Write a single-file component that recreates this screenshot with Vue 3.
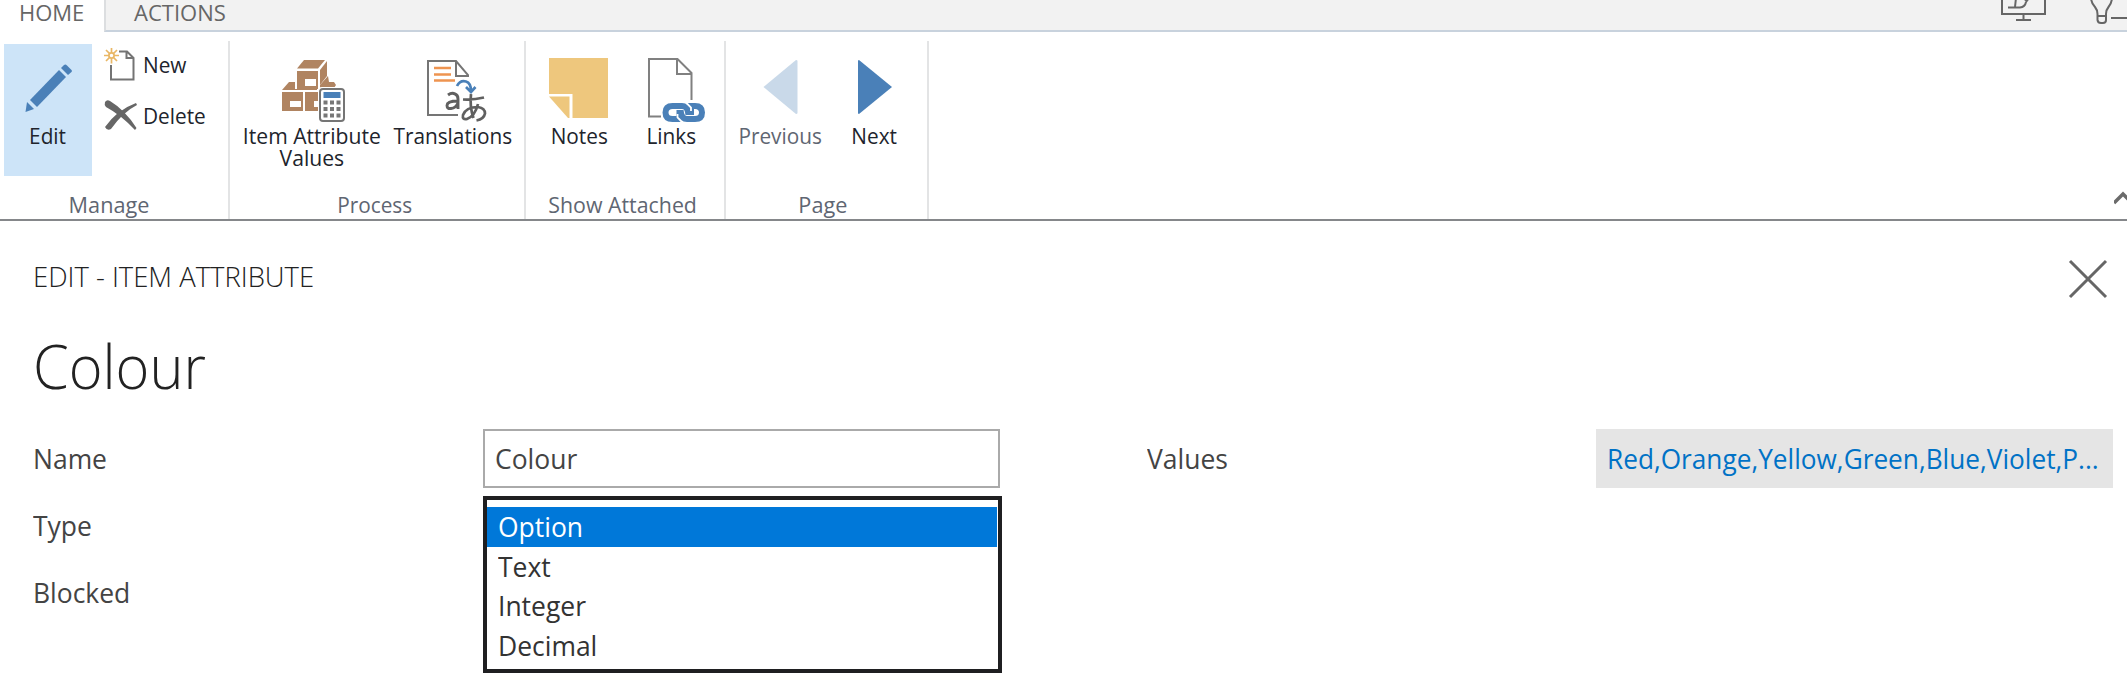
<script setup>
const options = ['Option', 'Text', 'Integer', 'Decimal']
const selected = 'Option'
</script>

<template>
  <div class="page">
    <nav class="tabs">
      <div class="tab active"><span class="t home">HOME</span></div>
      <div class="tab rest"><span class="t actions">ACTIONS</span></div>
      <svg class="tools" viewBox="0 0 127 30" width="127" height="30" fill="none" stroke="#666" stroke-width="2">
        <path d="M2 -4V14H45V-4M23.500 14V20M16 20H31" />
        <path d="M8 7.500H20Q25 7 26 2L29 -2M16 -2L15 7M23 -2L27 1" />
        <path d="M91 -3Q91 3 95 7Q97.500 10 97.500 14V20Q98 23 101 23H103Q106 23 106 20V14Q106 10 108.500 7Q112 3 112 -3M98 16H106" />
        <path d="M111 18H127" />
      </svg>
    </nav>

    <section class="ribbon">
      <div class="group g-manage">
        <div class="items">
          <button class="big edit">
            <svg class="icon" viewBox="0 0 64 64">
              <g fill="#4a80b8">
                <path d="M9.500 54L11 44L18 51Z" />
                <path d="M14 42L43 12L50 19L21 49Z" />
                <path d="M45 10L48 7Q49.500 6 51 7.500L55.500 12Q56.500 13 55.500 14L52 17Z" />
              </g>
            </svg>
            <span class="t">Edit</span>
          </button>
          <div class="stack">
            <button class="small">
              <svg class="sicon" viewBox="0 0 34 34" fill="none">
                <path d="M16 3.500H24L30.500 10V31.500H8V17M23.500 4V10H30" stroke="#747474" stroke-width="2" />
                <path d="M8.500 0V5M8.500 10V15.500M1 7.500H6M11 7.500H16M3 2L6.500 5.500M10.500 9.500L14 13M14 2L10.500 5.500M6.500 9.500L3 13" stroke="#e9b765" stroke-width="1.700" />
                <circle cx="8.500" cy="7.500" r="2.600" stroke="#e9b765" stroke-width="1.700" />
              </svg>
              <span class="t">New</span>
            </button>
            <button class="small">
              <svg class="sicon" viewBox="0 0 34 34" fill="#666">
                <path d="M2 3Q4 0 7 2Q22 11 33.500 29L32 31Q18 16 3 8Q1 6 2 3Z" />
                <path d="M33 4L34 6Q20 13 8 30Q4 32 2 28Q14 11 33 4Z" />
              </svg>
              <span class="t">Delete</span>
            </button>
          </div>
        </div>
        <div class="caption"><span class="t">Manage</span></div>
      </div>

      <div class="group g-process">
        <div class="items">
          <button class="big w-item">
            <svg class="icon" viewBox="0 0 64 64">
              <g fill="#b08461">
                <path d="M24 2H45L38 10.500H17Z" />
                <path d="M47 3V18L40 27V12Z" />
                <path d="M17 13H38V31H17Z" />
                <path d="M9 24H15V31H37V32H2Z" />
                <path d="M2 34H23V53H2ZM25 34H44V53H25Z" />
                <path d="M48 18L49 24H54L56 27L54 30H40V27Z" />
              </g>
              <path d="M25 21H36V28H25ZM10 43H21V49H10ZM34 43H40V49H34Z" fill="#fff" />
              <rect x="38" y="29" width="27" height="36" rx="4" fill="#fff" />
              <rect x="40" y="31" width="24" height="32" rx="3" fill="#fff" stroke="#757575" stroke-width="2" />
              <rect x="43.500" y="34" width="17" height="6" fill="#4a80b8" />
              <path d="M43.500 44.500H47.500M50 44.500H54M56.500 44.500H60.500M43.500 51H47.500M50 51H54M56.500 51H60.500M43.500 57.500H47.500M50 57.500H54M56.500 57.500H60.500" stroke="#777" stroke-width="4" />
            </svg>
            <span class="t wide">Item Attribute<br>Values</span>
          </button>
          <button class="big w-trans">
            <svg class="icon" viewBox="0 0 64 64" fill="none">
              <path d="M37 57H7V3H35L47 17V18H35V3" stroke="#757575" stroke-width="2" />
              <path d="M13 10H30M13 16.500H30M13 22.500H34" stroke="#ee9450" stroke-width="2.500" />
              <path d="M36 28Q39 22 45 23.500Q50 25 50 33M45 29L50 34L54.500 29" stroke="#4a80b8" stroke-width="2.700" />
              <path d="M27 37Q31 34 34 36Q37 37 37 41V51M37 43Q26 43 26 47.500Q26 51 30 50.500Q35 50 37 45" stroke="#606060" stroke-width="2.900" />
              <path d="M42 41.500Q53 42 63 39.500M50 36Q48.500 49 52.500 60M57 46Q54 58 46 61Q41 62 42 57Q45 49 57 49Q64 50 64 55.500Q63 61 55.500 62.500" stroke="#606060" stroke-width="2.700" />
            </svg>
            <span class="t">Translations</span>
          </button>
        </div>
        <div class="caption"><span class="t">Process</span></div>
      </div>

      <div class="group g-attached">
        <div class="items">
          <button class="big w-notes">
            <svg class="icon" viewBox="0 0 64 64" fill="#eec77d">
              <path d="M2 0H61V60H25.500V36H2Z" />
              <path d="M2 38.500H22.500V60H21Z" />
            </svg>
            <span class="t">Notes</span>
          </button>
          <button class="big w-links">
            <svg class="icon" viewBox="0 0 64 64" fill="none">
              <path d="M22 58.500H10V1H38.500L52.500 15V42M38 1V16H52" stroke="#808080" stroke-width="2" />
              <path d="M43 61H33.500Q26.500 61 26.500 54.500Q26.500 48 33.500 48H43Q48 48 49 54L55 54" stroke="#4a80b8" stroke-width="6" />
              <path d="M48 48H56Q63 48 63 54.500Q63 61 56 61H48Q43 61 42 55L37.500 55" stroke="#4a80b8" stroke-width="6" />
              <path d="M47 44.500L52 49.500V53M43.500 64.500L38.500 59.500V56" stroke="#fff" stroke-width="1.800" />
            </svg>
            <span class="t">Links</span>
          </button>
        </div>
        <div class="caption"><span class="t wide">Show Attached</span></div>
      </div>

      <div class="group g-page">
        <div class="items">
          <button class="big w-prev">
            <svg class="icon" viewBox="0 0 64 64"><path d="M15.500 29L48 2Q49.500 2 49.500 3V55Q49.500 56 48 56Z" fill="#c9d9e9" /></svg>
            <span class="t">Previous</span>
          </button>
          <button class="big w-next">
            <svg class="icon" viewBox="0 0 64 64"><path d="M49 29L16 2Q15 2 15 3V55Q15 56 16 56Z" fill="#4a80b8" /></svg>
            <span class="t">Next</span>
          </button>
        </div>
        <div class="caption"><span class="t wide">Page</span></div>
      </div>

      <svg class="collapse" viewBox="0 0 13 16" width="13" height="16"><path d="M0 12L9 3L18 12" fill="none" stroke="#6b6b6b" stroke-width="3.500" /></svg>
    </section>

    <header class="head">
      <div class="titles">
        <div class="crumb"><span class="t">EDIT - ITEM ATTRIBUTE</span></div>
        <h1><span class="t">Colour</span></h1>
      </div>
      <svg class="close" viewBox="0 0 40 40" width="40" height="40"><path d="M2 2L38 38M38 2L2 38" stroke="#666" stroke-width="3" /></svg>
    </header>

    <main class="form">
      <div class="col labels">
        <label><span class="t">Name</span></label>
        <label><span class="t">Type</span></label>
        <label><span class="t">Blocked</span></label>
      </div>
      <div class="col fields">
        <div class="input"><span class="t">Colour</span></div>
        <ul class="list">
          <li v-for="o in options" :key="o" :class="{ on: o === selected }"><span class="t">{{ o }}</span></li>
        </ul>
      </div>
      <div class="col vlabel"><label><span class="t">Values</span></label></div>
      <div class="link"><span class="t">Red,Orange,Yellow,Green,Blue,Violet,P...</span></div>
    </main>
  </div>
</template>

<style>
body { margin: 0; background: #fff; overflow: hidden; }
</style>

<style scoped>
.page {
  width: 2127px; height: 684px; overflow: hidden; background: #fff;
  font-family: "Open Sans", "Noto Sans", sans-serif; font-size: 22px; color: #21242c;
}
.page * { box-sizing: border-box; }
.t { display: inline-block; white-space: nowrap; transform: scaleX(0.945); transform-origin: left center; }
button { border: 0; padding: 0; background: none; font: inherit; color: inherit; }
.tabs { display: flex; height: 32px; color: #666; line-height: 25px; }
.tab { height: 32px; }
.tab .t { transform: none; }
.active { width: 104px; padding-left: 19px; }
.rest { flex: 1; padding-left: 28px; background: #f2f2f2; border-bottom: 2px solid #c8d2dd; border-left: 2px solid #dcdee0; }
.tools { background: #f2f2f2; width: 127px; height: 32px; border-bottom: 2px solid #c8d2dd; }
.ribbon { display: flex; height: 189px; padding-top: 9px; border-bottom: 2px solid #85878a; }
.group { display: flex; flex-direction: column; justify-content: space-between; height: 178px; border-right: 2px solid #e3e4e5; padding-top: 3px; }
.items { display: flex; height: 132px; }
.big { display: flex; flex-direction: column; align-items: center; height: 132px; padding-top: 14px; line-height: 22px; text-align: center; flex: none; }
.big .t { margin-top: 2px; transform-origin: center; }
.big .wide { transform: scaleX(0.96); }
.icon { width: 64px; height: 64px; overflow: visible; flex: none; }
.edit { width: 88px; background: #cde4f8; }
.stack { display: flex; flex-direction: column; gap: 17px; padding: 4px 0 0 11px; }
.small { display: flex; align-items: center; gap: 6px; height: 34px; }
.small .t { margin-top: -3px; }
.sicon { width: 34px; height: 34px; overflow: visible; }
.g-manage { width: 230px; padding-left: 4px; }
.g-process { width: 296px; padding-left: 7px; }
.g-attached { width: 200px; padding-left: 7px; }
.g-page { width: 203px; padding-left: 4px; }
.w-item { width: 150px; }
.w-trans { width: 132px; }
.w-notes { width: 92px; }
.w-links { width: 92px; }
.w-prev { width: 100px; color: #5f6672; }
.w-next { width: 89px; }
.caption { height: 30px; line-height: 30px; text-align: center; color: #5f6672; padding-right: 12px; }
.caption .t { transform-origin: center; }
.g-manage .caption { padding-right: 14px; }
.g-manage .caption .t, .g-page .caption .t { transform: scaleX(0.985); }
.g-attached .caption .t { transform: scaleX(0.97); }
.collapse { margin: 150px 0 0 auto; }
.head { display: flex; justify-content: space-between; height: 208px; padding: 38px 19px 0 33px; color: #222; }
.crumb { height: 38px; line-height: 34px; font-size: 28px; font-weight: 300; }
.crumb .t { transform: scaleX(0.98); }
h1 { margin: 24px 0 0; height: 90px; line-height: 90px; font-size: 61px; font-weight: 300; }
.form { display: flex; font-size: 28px; color: #444; padding-left: 33px; }
.col { flex: none; }
label { display: block; height: 67px; line-height: 59px; }
.labels { width: 450px; }
.fields { width: 519px; }
.input { width: 517px; height: 59px; line-height: 55px; border: 2px solid #aaa; padding-left: 10px; }
.list { list-style: none; margin: 8px 0 0; padding: 7px 1px 10px 0; height: 177px; border: 4px solid #1f1f21; color: #333; }
.list li { height: 39.500px; line-height: 38px; padding-left: 11px; }
.list .on { background: #0078d9; color: #fff; }
.vlabel { width: 594px; padding-left: 145px; }
.link { width: 517px; height: 59px; line-height: 59px; background: #e5e5e5; color: #0072c6; padding-left: 11px; }
.link .t { transform: scaleX(0.936); }
</style>
